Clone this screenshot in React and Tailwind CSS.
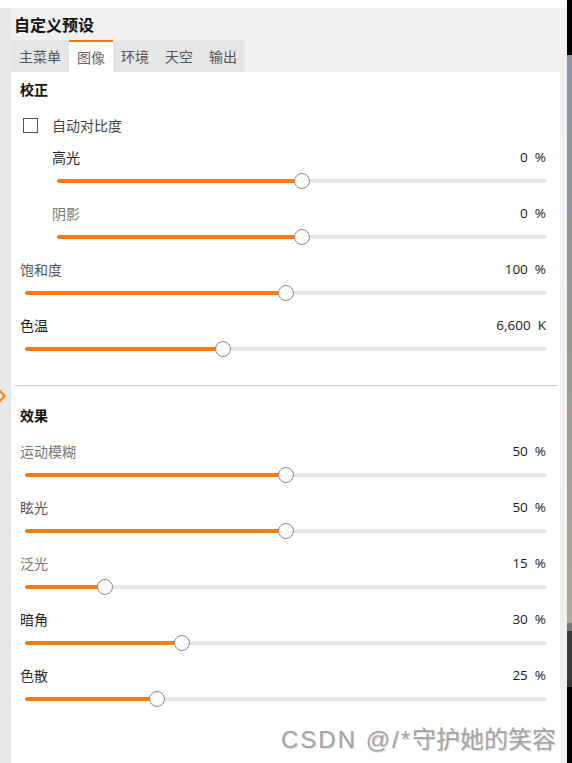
const ORANGE = "#ff7a00";

const correction = [
  { label: "高光", value: "0", unit: "%", pct: 0.5, indent: true, tone: "text-[#222]" },
  { label: "阴影", value: "0", unit: "%", pct: 0.5, indent: true, tone: "text-[#777]" },
  { label: "饱和度", value: "100", unit: "%", pct: 0.5, tone: "text-[#555]" },
  { label: "色温", value: "6,600", unit: "K", pct: 0.379, tone: "text-[#222]" },
];

const effects = [
  { label: "运动模糊", value: "50", unit: "%", pct: 0.5, tone: "text-[#777]" },
  { label: "眩光", value: "50", unit: "%", pct: 0.5, tone: "text-[#555]" },
  { label: "泛光", value: "15", unit: "%", pct: 0.153, tone: "text-[#777]" },
  { label: "暗角", value: "30", unit: "%", pct: 0.3, tone: "text-[#222]" },
  { label: "色散", value: "25", unit: "%", pct: 0.253, tone: "text-[#333]" },
];

const tabs = ["主菜单", "图像", "环境", "天空", "输出"];

const cjk = { fontFamily: '"Noto Sans CJK SC", "Noto Sans", sans-serif' };
const num = { fontFamily: '"Open Sans", "Noto Sans", sans-serif' };

function Slider({ pct }) {
  return (
    <div className="relative h-[4px] bg-[#e6e6e6] rounded-sm">
      <div className="absolute left-0 top-0 h-[4px] rounded-sm" style={{ width: `${pct * 100}%`, background: ORANGE }} />
      <div
        className="absolute top-1/2 w-[16px] h-[16px] -translate-x-1/2 -translate-y-1/2 rounded-full bg-white border border-[#888]"
        style={{ left: `${pct * 100}%` }}
      />
    </div>
  );
}

function SliderRow({ item }) {
  return (
    <div className={`h-[56px] flex flex-col ${item.indent ? "pl-[32px]" : ""}`}>
      <div className="h-[26px] flex items-center justify-between">
        <span className={`text-[14px] ${item.tone}`} style={cjk}>{item.label}</span>
        <span className="flex gap-[7px] text-[13.5px] text-[#1a1a1a] pr-[1px]" style={num}>
          <span>{item.value}</span>
          <span>{item.unit}</span>
        </span>
      </div>
      <div className="h-[22px] flex flex-col justify-center pl-[5px]">
        <Slider pct={item.pct} />
      </div>
    </div>
  );
}

export default function App() {
  return (
    <div className="w-[572px] h-[763px] flex bg-white overflow-hidden" style={cjk}>
      <div className="w-[567px] flex flex-col">
        <div className="h-[8px] bg-white" />
        <div className="flex-1 flex">
          <div className="w-[11px] bg-[#e8e8e8] relative">
            <svg className="absolute left-0 top-[381px]" width="6" height="14" viewBox="0 0 6 14">
              <path d="M-1 1 L4.5 7 L-1 13" fill="none" stroke={ORANGE} strokeWidth="2" />
            </svg>
          </div>
          <div className="flex-1 bg-[#f0f0f0] flex flex-col">
            <div className="h-[32px] flex items-center pl-[3px] text-[16px] font-semibold text-[#111]">自定义预设</div>
            <div className="h-[32px] flex">
              {tabs.map((t, i) =>
                i === 1 ? (
                  <div key={t} className="px-[8px] bg-white border-t-2 border-[#ff7a00] flex items-center text-[14px] text-[#666]">
                    {t}
                  </div>
                ) : (
                  <div key={t} className="px-[8px] bg-[#e6e6e6] flex items-center text-[14px] text-[#555]">
                    {t}
                  </div>
                )
              )}
            </div>
            <div className="flex-1 flex">
              <div className="w-[549px] bg-white relative">
                <div className="pl-[9px] pr-[13px]">
                  <div className="h-[34px] flex items-center text-[14px] font-bold text-[#111]">校正</div>
                  <div className="h-[38px] flex items-center">
                    <div className="ml-[3px] w-[15px] h-[15px] border border-[#555] bg-white" />
                    <span className="ml-[14px] text-[14px] text-[#444]">自动对比度</span>
                  </div>
                  {correction.map((it) => (
                    <SliderRow key={it.label} item={it} />
                  ))}
                </div>
                <div className="mt-[17px] ml-[4px] mr-[3px] h-[1px] bg-[#c8c8c8]" />
                <div className="pl-[9px] pr-[13px]">
                  <div className="h-[52px] pt-[6px] flex items-center text-[14px] font-bold text-[#111]">效果</div>
                  {effects.map((it) => (
                    <SliderRow key={it.label} item={it} />
                  ))}
                </div>
                <div
                  className="absolute right-[4px] top-[650px] text-[24px] text-[#a3a3a3] [text-shadow:1px_1px_1px_rgba(0,0,0,0.15)]"
                  style={{ fontFamily: '"Liberation Sans", "Noto Sans CJK SC", sans-serif' }}
                >
                  <span className="tracking-[2px]">CSDN @/*</span>守护她的笑容
                </div>
              </div>
              <div className="flex-1" />
            </div>
          </div>
        </div>
      </div>
      <div className="w-[5px] flex flex-col">
        <div className="h-[55px] bg-black" />
        <div className="h-[568px] bg-gradient-to-b from-[#8a96a8] via-[#9a9890] to-[#b0a898]" />
        <div className="h-[8px] bg-[#777]" />
        <div className="h-[56px] bg-[#3a3a3a]" />
        <div className="flex-1 bg-black" />
      </div>
    </div>
  );
}
